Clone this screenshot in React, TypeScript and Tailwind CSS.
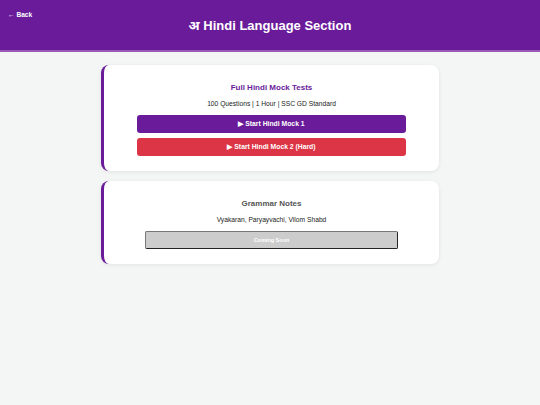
import React from 'react';

const font = { fontFamily: '"Liberation Sans", "Noto Sans", Arial, sans-serif' };

export default function App() {
  return (
    <div className="min-h-[405px] w-full bg-[#f4f5f5]" style={font}>
      {/* header */}
      <header className="relative h-[52px] bg-[#6a1b9a] border-b-2 border-[#9b59b6] text-white">
        <a className="absolute left-[8px] top-[10px] text-[6.6px] font-bold text-white">← Back</a>
        <h1 className="pt-[16px] text-center text-[13px] font-bold leading-[18px]">
          <span style={{ fontFamily: '"Noto Sans", "Liberation Sans", sans-serif' }}>अ</span> Hindi Language Section
        </h1>
      </header>

      <main className="mx-auto mt-[13px] flex w-[338px] flex-col gap-[10px]">
        {/* mock tests */}
        <section className="rounded-[8px] border-l-[3px] border-[#6a1b9a] bg-white px-[33px] pt-[16px] pb-[15px] text-center shadow-[0_1px_4px_rgba(0,0,0,0.08)]">
          <h2 className="text-[8px] font-bold leading-[14px] text-[#6a1b9a]">Full Hindi Mock Tests</h2>
          <p className="mt-[3px] text-[6.7px] leading-[12px] text-[#222]">100 Questions | 1 Hour | SSC GD Standard</p>
          <button className="mt-[5px] flex h-[18px] w-full items-center justify-center rounded-[3px] bg-[#6a1b9a] text-[6.8px] font-bold text-white">
            ▶ Start Hindi Mock 1
          </button>
          <button className="mt-[5px] flex h-[18px] w-full items-center justify-center rounded-[3px] bg-[#dc3545] text-[6.8px] font-bold text-white">
            ▶ Start Hindi Mock 2 (Hard)
          </button>
        </section>

        {/* grammar */}
        <section className="rounded-[8px] border-l-[3px] border-[#6a1b9a] bg-white px-[41px] pt-[16px] pb-[15px] text-center shadow-[0_1px_4px_rgba(0,0,0,0.08)]">
          <h2 className="text-[8px] font-bold leading-[14px] text-[#555]">Grammar Notes</h2>
          <p className="mt-[3px] text-[6.7px] leading-[12px] text-[#222]">Vyakaran, Paryayvachi, Vilom Shabd</p>
          <button className="mt-[5px] flex h-[18px] w-full items-center justify-center rounded-[2px] border border-[#222] border-t-[#777] border-l-[#777] bg-[#cccccc] text-[5.5px] font-bold text-white">
            Coming Soon
          </button>
        </section>
      </main>
    </div>
  );
}
